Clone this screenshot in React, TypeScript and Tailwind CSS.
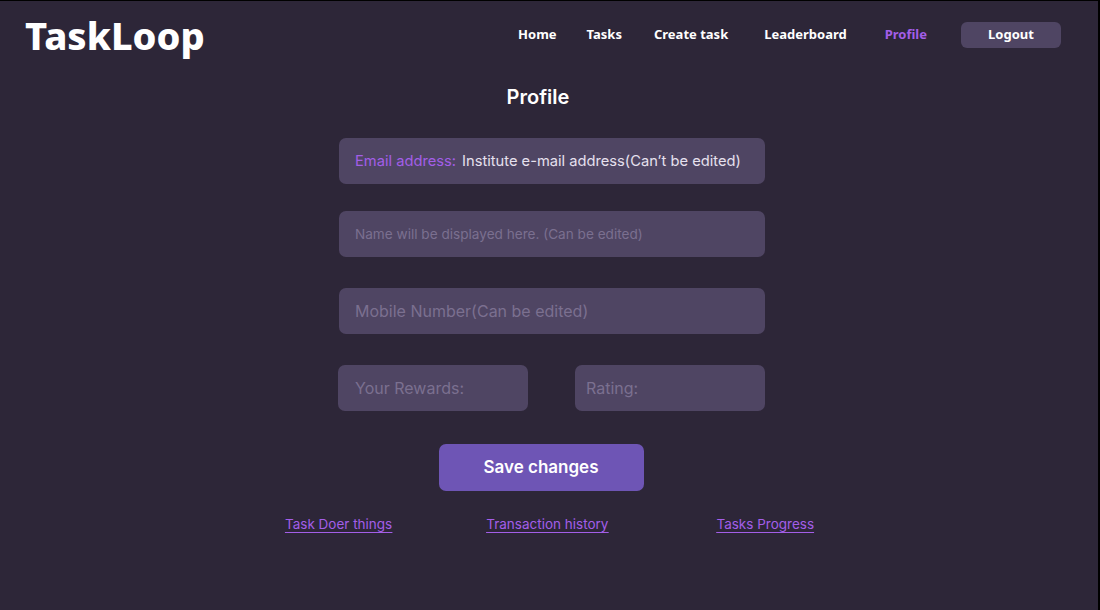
import React from 'react';

const navItems = ['Home', 'Tasks', 'Create task', 'Leaderboard', 'Profile'];
const navGaps = ['mr-[30px]', 'mr-[32px]', 'mr-[36px]', 'mr-[38px]', 'mr-[34px]'];

const Field: React.FC<{ className?: string; children: React.ReactNode }> = ({ className = '', children }) => (
  <div className={`h-[46px] rounded-[7px] bg-[#4f4563] flex items-center ${className}`}>{children}</div>
);

const App: React.FC = () => {
  return (
    <div className="w-[1100px] h-[610px] bg-[#2d2638] border-t border-t-black border-r-2 border-r-black font-['Inter',sans-serif] overflow-hidden">
      <header className="flex items-center justify-between pl-[25px] pr-[37px] h-[70px]">
        <h1 className="font-['Noto_Sans',sans-serif] font-extrabold text-[38px] text-white leading-none -mt-[2px]">
          TaskLoop
        </h1>
        <nav className="flex items-center font-['Noto_Sans',sans-serif] font-bold text-[13px] text-white -mt-[3px]">
          {navItems.map((item, i) => (
            <a key={item} className={`${item === 'Profile' ? 'text-[#a35ee8]' : 'text-white'} ${navGaps[i]}`}>
              {item}
            </a>
          ))}
          <button className="w-[100px] h-[26px] rounded-[6px] bg-[#4f4563] text-white">Logout</button>
        </nav>
      </header>

      <main className="flex flex-col items-center">
        <h2 className="text-[20px] font-semibold text-white mt-[12px] leading-[28px] -ml-[22px]">Profile</h2>

        <div className="w-[426px] ml-[6px] mt-[27px] flex flex-col">
          <Field className="pl-[16px]">
            <span className="text-[14.7px] text-[#a35ee8]">Email address:</span>
            <span className="text-[14.7px] text-[#e6e0ee] ml-[6px]">Institute e-mail address(Can’t be edited)</span>
          </Field>
          <Field className="mt-[27px] pl-[16px]">
            <span className="text-[13.6px] text-[#7b7090]">Name will be displayed here. (Can be edited)</span>
          </Field>
          <Field className="mt-[31px] pl-[16px]">
            <span className="text-[16px] text-[#7b7090]">Mobile Number(Can be edited)</span>
          </Field>
          <div className="flex justify-between mt-[31px] -ml-[1px]">
            <Field className="w-[190px] pl-[17px]">
              <span className="text-[16px] text-[#7b7090]">Your Rewards:</span>
            </Field>
            <Field className="w-[190px] pl-[11px]">
              <span className="text-[16px] text-[#7b7090]">Rating:</span>
            </Field>
          </div>
        </div>

        <button className="mt-[33px] w-[205px] h-[47px] rounded-[7px] bg-[#6e55b5] text-white text-[17px] font-semibold -ml-[16px]">
          Save changes
        </button>

        <div className="flex mt-[23px] text-[13.5px] text-[#a35ee8] underline underline-offset-[3px] ml-[1px]">
          <a className="mr-[94px]">Task Doer things</a>
          <a className="mr-[108px]">Transaction history</a>
          <a>Tasks Progress</a>
        </div>
      </main>
    </div>
  );
};

export default App;
